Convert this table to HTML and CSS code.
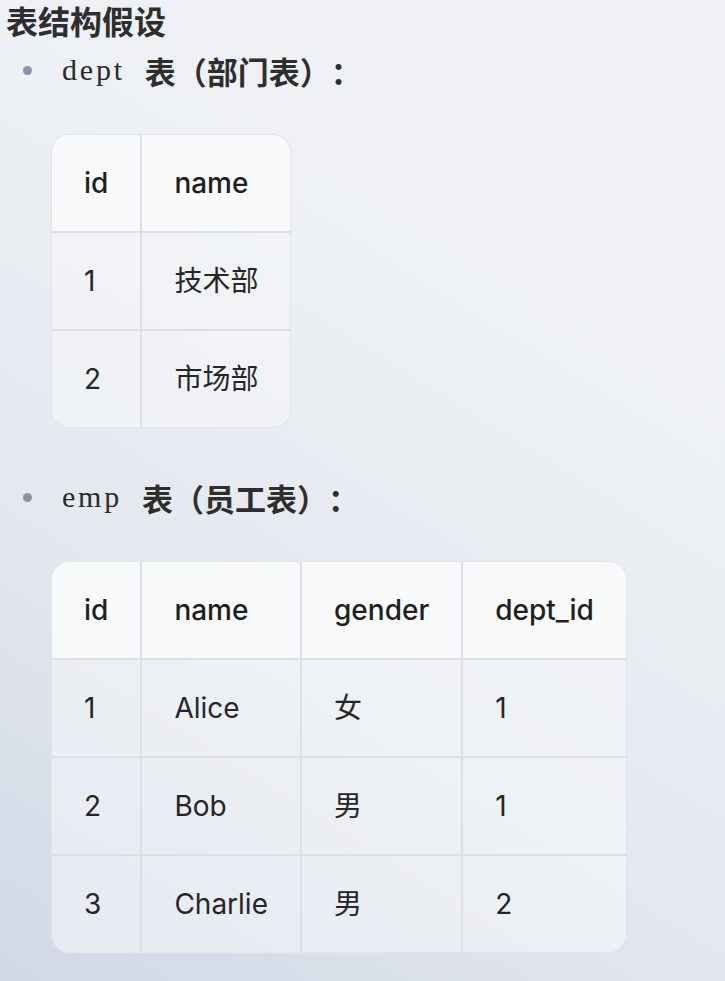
FILE: index.html
```html
<!DOCTYPE html>
<html lang="zh">
<head>
<meta charset="utf-8">
<link rel="stylesheet" href="styles.css">
</head>
<body>
<div class="page">
  <h3 class="title">表结构假设</h3>
  <ul class="list">
    <li class="item">
      <div class="label"><span class="dot"></span><code class="code">dept</code><strong class="strong">表（部门表）</strong><span class="colon">：</span></div>
      <div class="table-wrap">
        <table class="tbl">
          <thead><tr><th>id</th><th>name</th></tr></thead>
          <tbody>
            <tr><td>1</td><td>技术部</td></tr>
            <tr><td>2</td><td>市场部</td></tr>
          </tbody>
        </table>
      </div>
    </li>
    <li class="item">
      <div class="label"><span class="dot"></span><code class="code">emp</code><strong class="strong">表（员工表）</strong><span class="colon">：</span></div>
      <div class="table-wrap">
        <table class="tbl">
          <thead><tr><th>id</th><th>name</th><th>gender</th><th>dept_id</th></tr></thead>
          <tbody>
            <tr><td>1</td><td>Alice</td><td>女</td><td>1</td></tr>
            <tr><td>2</td><td>Bob</td><td>男</td><td>1</td></tr>
            <tr><td>3</td><td>Charlie</td><td>男</td><td>2</td></tr>
          </tbody>
        </table>
      </div>
    </li>
  </ul>
</div>
</body>
</html>
```

FILE: styles.css
```css
html, body {
  margin: 0;
  padding: 0;
  height: 100%;
}
body {
  background: linear-gradient(32deg, #d1d8e5 0%, #e4e8ef 35%, #edf0f4 65%, #f0f2f5 100%);
  font-family: Inter, "Noto Sans CJK SC", sans-serif;
  color: #222;
  overflow: hidden;
}
.page {
  padding: 0 0 0 6px;
}
.title {
  margin: 0;
  font-family: "Noto Sans CJK SC", sans-serif;
  font-weight: 700;
  font-size: 32px;
  line-height: 40px;
  color: #2e2e2e;
}
.list {
  list-style: none;
  margin: 0;
  padding: 0;
}
.item {
  margin: 0;
}
.item + .item {
  margin-top: 35px;
}
.label {
  display: flex;
  align-items: center;
  height: 60px;
  padding-left: 17px;
}
.dot {
  width: 9px;
  height: 9px;
  border-radius: 50%;
  background: #8f8fa8;
  margin-right: 30px;
}
.code {
  font-family: "Liberation Serif", serif;
  font-size: 30px;
  letter-spacing: 2.8px;
  color: #2a2a2a;
  margin-right: 20px;
}
.strong {
  font-family: "Noto Sans CJK SC", sans-serif;
  font-weight: 700;
  font-size: 31px;
  color: #2e2e2e;
}
.colon {
  font-family: "Noto Sans CJK SC", sans-serif;
  font-weight: 700;
  font-size: 31px;
  color: #2e2e2e;
}
.table-wrap {
  display: inline-block;
  margin: 34px 0 0 45px;
  border: 1.5px solid #e1e4e9;
  border-radius: 18px;
  overflow: hidden;
}
.tbl {
  border-collapse: separate;
  border-spacing: 0;
  font-size: 28px;
  line-height: 32px;
}
.tbl th, .tbl td {
  padding: 32px;
  text-align: left;
  border-right: 2px solid #dcdfe4;
  border-bottom: 2px solid #dcdfe4;
  white-space: nowrap;
}
.tbl th:last-child, .tbl td:last-child {
  border-right: none;
}
.tbl tbody tr:last-child td {
  border-bottom: none;
}
.tbl th {
  font-weight: 500;
  background: rgba(250, 251, 252, 0.85);
  color: #1f1f1f;
}
.tbl td {
  font-weight: 400;
  background: rgba(246, 248, 250, 0.55);
  color: #262626;
}
```
